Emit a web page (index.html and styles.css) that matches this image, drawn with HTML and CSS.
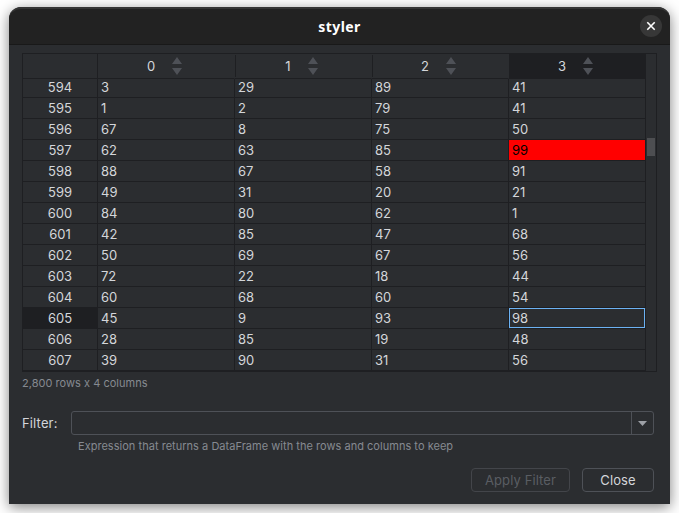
FILE: index.html
```
<!DOCTYPE html>
<html lang="en">
<head>
<meta charset="utf-8">
<title>styler</title>
<link rel="stylesheet" href="styles.css">
</head>
<body>
<div class="window">
  <header class="titlebar">
    <h1 class="title">styler</h1>
    <button class="window-close" aria-label="Close window"><svg width="22" height="22" viewBox="0 0 22 22"><path d="M7.3 7.3l7.4 7.4M14.7 7.3l-7.4 7.4" stroke="#fff" stroke-width="1.6"/></svg></button>
  </header>
  <main class="content">
    <div class="table-frame">
      <div class="grid">
        <div class="row head">
          <div class="index"></div>
          <div class="col"><span>0</span><svg class="sort" width="10" height="18" viewBox="0 0 10 18"><path d="M0 7L5 0l5 7zM0 11h10l-5 7z"/></svg></div>
          <div class="col"><span>1</span><svg class="sort" width="10" height="18" viewBox="0 0 10 18"><path d="M0 7L5 0l5 7zM0 11h10l-5 7z"/></svg></div>
          <div class="col"><span>2</span><svg class="sort" width="10" height="18" viewBox="0 0 10 18"><path d="M0 7L5 0l5 7zM0 11h10l-5 7z"/></svg></div>
          <div class="col active"><span>3</span><svg class="sort" width="10" height="18" viewBox="0 0 10 18"><path d="M0 7L5 0l5 7zM0 11h10l-5 7z"/></svg></div>
        </div>
        <div class="row first"><div class="index">594</div><div>3</div><div>29</div><div>89</div><div>41</div></div>
        <div class="row"><div class="index">595</div><div>1</div><div>2</div><div>79</div><div>41</div></div>
        <div class="row"><div class="index">596</div><div>67</div><div>8</div><div>75</div><div>50</div></div>
        <div class="row"><div class="index">597</div><div>62</div><div>63</div><div>85</div><div class="max">99</div></div>
        <div class="row"><div class="index">598</div><div>88</div><div>67</div><div>58</div><div>91</div></div>
        <div class="row"><div class="index">599</div><div>49</div><div>31</div><div>20</div><div>21</div></div>
        <div class="row"><div class="index">600</div><div>84</div><div>80</div><div>62</div><div>1</div></div>
        <div class="row"><div class="index">601</div><div>42</div><div>85</div><div>47</div><div>68</div></div>
        <div class="row"><div class="index">602</div><div>50</div><div>69</div><div>67</div><div>56</div></div>
        <div class="row"><div class="index">603</div><div>72</div><div>22</div><div>18</div><div>44</div></div>
        <div class="row"><div class="index">604</div><div>60</div><div>68</div><div>60</div><div>54</div></div>
        <div class="row"><div class="index active">605</div><div>45</div><div>9</div><div>93</div><div class="focus">98</div></div>
        <div class="row"><div class="index">606</div><div>28</div><div>85</div><div>19</div><div>48</div></div>
        <div class="row"><div class="index">607</div><div>39</div><div>90</div><div>31</div><div>56</div></div>
      </div>
      <div class="scrollbar"><div class="thumb"></div></div>
    </div>
    <p class="summary">2,800 rows x 4 columns</p>
    <div class="filter">
      <span class="filter-label">Filter:</span>
      <div class="combo"><div class="combo-text"></div><div class="combo-arrow"><svg width="9" height="5" viewBox="0 0 9 5"><path d="M0 0h9L4.500 5z" fill="#9da0a6"/></svg></div></div>
    </div>
    <p class="hint">Expression that returns a DataFrame with the rows and columns to keep</p>
    <div class="actions">
      <button class="button apply" disabled>Apply Filter</button>
      <button class="button close">Close</button>
    </div>
  </main>
</div>
</body>
</html>
```
FILE: styles.css
```
* { box-sizing: border-box; }

body {
  margin: 0;
  height: 513px;
  overflow: hidden;
  padding: 7px 9px 9px;
  background: #fff;
  font-family: Inter, sans-serif;
  font-size: 13px;
  color: #d4d6da;
}

.window {
  height: 497px;
  background: #2b2d30;
  border-radius: 12px 12px 0 0;
  box-shadow: 0 3px 14px rgba(0, 0, 0, 0.5);
}

.titlebar {
  display: grid;
  grid-template-columns: 38px 1fr 38px;
  align-items: center;
  height: 38px;
  background: #222;
  border-top: 2px solid #353535;
  border-bottom: 1px solid #191919;
  border-radius: 12px 12px 0 0;
}

.title {
  grid-column: 2;
  margin: 0;
  font: bold 14px/20px "Noto Sans", sans-serif;
  letter-spacing: 0.4px;
  color: #fff;
  text-align: center;
}

.window-close {
  width: 22px;
  height: 22px;
  margin: -2px 0 0 8px;
  padding: 0;
  border: 0;
  border-radius: 50%;
  background: #373737;
}

.window-close svg { display: block; }

.content { padding: 8px 13px 0; }

.table-frame {
  display: flex;
  width: 635px;
  height: 319px;
  border: 1px solid #1e1f22;
}

.grid { width: 623px; }

.row {
  display: grid;
  grid-template-columns: 75px repeat(4, 137px);
  height: 21px;
  line-height: 20px;
}

.row > div {
  padding-left: 3px;
  border-right: 1px solid #1e1f22;
  border-bottom: 1px solid #1e1f22;
}

.row.first { height: 19px; line-height: 17px; }

.row > .index { padding: 0; text-align: center; }

.row > .active { background: #1e1f22; }

.row > .max { background: #f00; color: #000; }

.row > .focus {
  line-height: 18px;
  padding-left: 2px;
  border: 1px solid #6cb2f3;
  margin: 0 1px 1px 0;
  box-shadow: 1px 1px #1e1f22;
}

.row.head { height: 25px; }

.head > .col {
  display: flex;
  align-items: center;
  justify-content: center;
  gap: 17px;
  padding: 0 3px 0 0;
  border-right-color: transparent;
}

/* Short separators between the header cells */
.head > .col + .col:not(.active) {
  background: linear-gradient(#1e1f22, #1e1f22) 0 1px / 1px 22px no-repeat;
}

.sort { fill: #4e5157; }

.scrollbar { width: 10px; padding: 84px 1px 0; }

.thumb { height: 18px; background: #4d4e51; }

.summary {
  margin: 3px 0 0;
  font-size: 11px;
  line-height: 16px;
  letter-spacing: 0.03px;
  color: #868a91;
}

.filter {
  display: flex;
  align-items: center;
  margin-top: 20px;
}

.filter-label { width: 49px; margin-top: -1px; letter-spacing: 0.15px; }

.combo {
  display: flex;
  width: 583px;
  height: 24px;
  border: 1px solid #4e5157;
  border-radius: 3px;
}

.combo-text { flex: 1; }

.combo-arrow {
  display: flex;
  align-items: center;
  justify-content: center;
  width: 22px;
  border-left: 1px solid #4e5157;
}

.hint {
  margin: 3px 0 0 56px;
  font-size: 11px;
  line-height: 16px;
  letter-spacing: 0.03px;
  color: #868a91;
}

.actions {
  display: flex;
  justify-content: flex-end;
  gap: 12px;
  margin-top: 14px;
  padding-right: 3px;
}

.button {
  height: 24px;
  padding: 0;
  border: 1px solid #4e5157;
  border-radius: 4px;
  background: transparent;
  font: inherit;
  letter-spacing: 0.1px;
  color: #d4d6da;
}

.apply { width: 99px; color: #5a5d63; border-color: #43454a; }

.close { width: 72px; }
```
